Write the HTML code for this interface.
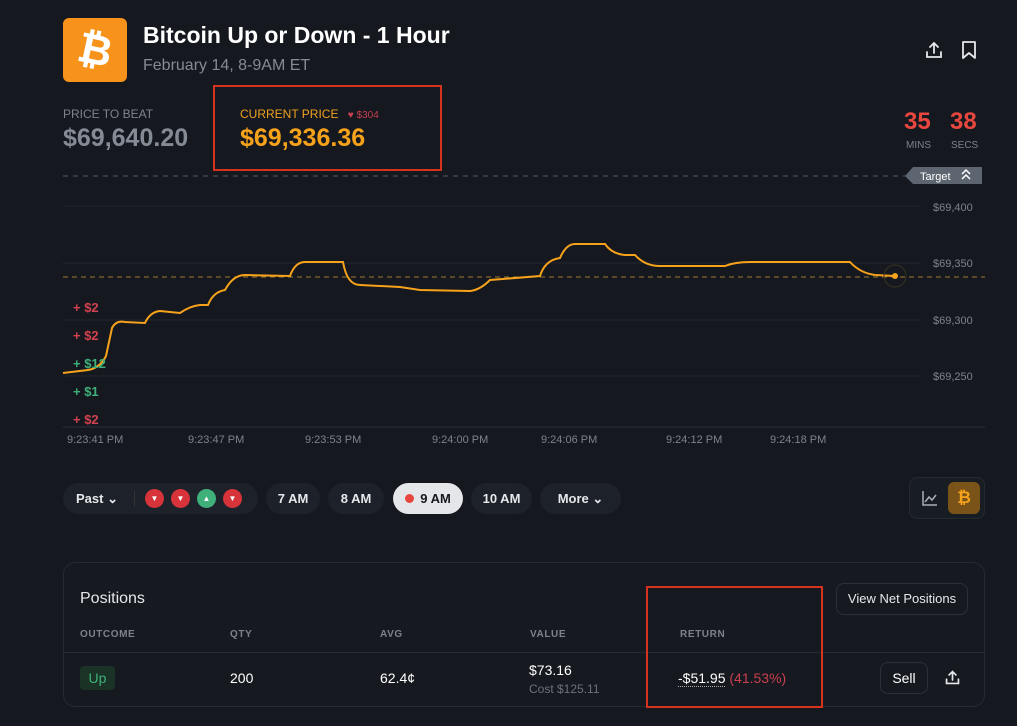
<!DOCTYPE html>
<html><head><meta charset="utf-8"><style>
*{margin:0;padding:0;box-sizing:border-box}
body{width:1017px;height:726px;background:#15181f;font-family:"Liberation Sans",sans-serif;color:#fff;position:relative;overflow:hidden}
.a{position:absolute}
.pill{position:absolute;top:483px;height:31px;border-radius:16px;background:#1d2129;color:#e6e8eb;font-size:13px;font-weight:bold;display:flex;align-items:center;justify-content:center}
.hd{position:absolute;top:629px;font-size:10px;color:#7d838c;letter-spacing:0.6px;font-weight:bold}
.c{width:19px;height:19px;border-radius:50%;display:inline-flex;align-items:center;justify-content:center;color:#fff;font-size:8px;font-style:normal}
</style></head><body>
<div class="a" style="left:63px;top:18px;width:64px;height:64px;background:#f7931a;border-radius:6px;color:#fff;font-size:42px;font-weight:bold;text-align:center;line-height:64px"><span style="display:inline-block;transform:rotate(12deg)">₿</span></div>
<div class="a" style="left:143px;top:22px;font-size:23px;font-weight:bold">Bitcoin Up or Down - 1 Hour</div>
<div class="a" style="left:143px;top:57px;font-size:16px;color:#858b94">February 14, 8-9AM ET</div>
<svg class="a" style="left:924px;top:40px" width="20" height="20" viewBox="0 0 20 20" fill="none" stroke="#e6e8eb" stroke-width="1.8" stroke-linecap="round"><path d="M10 13V3M6 7l4-4 4 4M3 12v5h14v-5"/></svg>
<svg class="a" style="left:960px;top:40px" width="18" height="20" viewBox="0 0 18 20" fill="none" stroke="#e6e8eb" stroke-width="1.8" stroke-linejoin="round"><path d="M3 2h12v16l-6-5-6 5z"/></svg>
<div class="a" style="left:63px;top:107px;font-size:12px;color:#7d838c">PRICE TO BEAT</div>
<div class="a" style="left:63px;top:124px;font-size:25px;font-weight:bold;color:#858b94">$69,640.20</div>
<div class="a" style="left:213px;top:85px;width:229px;height:86px;border:2.5px solid #d6321e"></div>
<div class="a" style="left:240px;top:107px;font-size:12px;color:#f0a020">CURRENT PRICE <span style="color:#c84050;font-size:10px;margin-left:6px">♥ $304</span></div>
<div class="a" style="left:240px;top:124px;font-size:25px;font-weight:bold;color:#f7a21b">$69,336.36</div>
<div class="a" style="left:904px;top:108px;font-size:24px;font-weight:bold;color:#e8473f">35</div>
<div class="a" style="left:950px;top:108px;font-size:24px;font-weight:bold;color:#e8473f">38</div>
<div class="a" style="left:906px;top:140px;font-size:10px;color:#7d838c">MINS</div>
<div class="a" style="left:951px;top:140px;font-size:10px;color:#7d838c">SECS</div>
<svg class="a" style="left:0;top:160px" width="1017" height="290">
<line x1="63" y1="16" x2="905" y2="16" stroke="#555b64" stroke-dasharray="5,5"/>
<path d="M905 16l8-9h69v17h-69z" fill="#5c6570"/>
<text x="920" y="20" fill="#fff" font-size="11" font-family="Liberation Sans">Target</text>
<path d="M962 14l4-4 4 4M962 19l4-4 4 4" stroke="#fff" stroke-width="1.5" fill="none"/>
<g stroke="#23272e"><line x1="63" y1="46" x2="920" y2="46"/><line x1="63" y1="103" x2="920" y2="103"/><line x1="63" y1="160" x2="920" y2="160"/><line x1="63" y1="216" x2="920" y2="216"/><line x1="63" y1="267" x2="985" y2="267" stroke="#2c3038"/></g>
<line x1="63" y1="117" x2="985" y2="117" stroke="#9a7a30" stroke-dasharray="5,4"/>
<g fill="#7d838c" font-size="11" font-family="Liberation Sans"><text x="933" y="51">$69,400</text><text x="933" y="107">$69,350</text><text x="933" y="164">$69,300</text><text x="933" y="220">$69,250</text>
<text x="67" y="283">9:23:41 PM</text><text x="188" y="283">9:23:47 PM</text><text x="305" y="283">9:23:53 PM</text><text x="432" y="283">9:24:00 PM</text><text x="541" y="283">9:24:06 PM</text><text x="666" y="283">9:24:12 PM</text><text x="770" y="283">9:24:18 PM</text></g>
<path d="M63 213L88 210Q100 208 106 196L112 168Q116 160 125 162L145 163Q150 152 160 151L180 153Q190 146 200 145L208 145Q213 132 225 130Q233 115 245 115L290 116Q295 102 305 102L343 102Q347 125 360 125L400 127L420 130L470 131Q480 130 490 120L540 116Q545 100 560 98Q566 84 575 84L605 84Q612 94 625 95L635 95Q645 106 660 106L725 106Q735 102 750 102L850 102Q860 113 875 115L895 116" stroke="#f7a21b" stroke-width="2" fill="none"/>
<circle cx="895" cy="116" r="11" fill="none" stroke="#3a3320"/><circle cx="895" cy="116" r="3" fill="#f7a21b"/>
<g font-size="13" font-weight="bold" font-family="Liberation Sans"><text x="73" y="152" fill="#d2424f">+ $2</text><text x="73" y="180" fill="#d2424f">+ $2</text><text x="73" y="208" fill="#3fb07a">+ $12</text><text x="73" y="236" fill="#3fb07a">+ $1</text><text x="73" y="264" fill="#d2424f">+ $2</text></g>
</svg>
<div class="pill" style="left:63px;width:195px;justify-content:flex-start;padding-left:13px">Past ⌄<span style="width:1px;height:16px;background:#333;margin:0 10px 0 16px"></span>
<span style="display:flex;gap:7px"><i class="c" style="background:#d6333a">▼</i><i class="c" style="background:#d6333a">▼</i><i class="c" style="background:#3fb07a">▲</i><i class="c" style="background:#d6333a">▼</i></span></div>
<div class="pill" style="left:266px;width:54px">7 AM</div>
<div class="pill" style="left:328px;width:56px">8 AM</div>
<div class="pill" style="left:393px;width:70px;background:#e4e6ea;color:#15181f"><i style="width:9px;height:9px;border-radius:50%;background:#e8473f;margin-right:6px"></i>9 AM</div>
<div class="pill" style="left:471px;width:61px">10 AM</div>
<div class="pill" style="left:540px;width:81px">More ⌄</div>
<div class="a" style="left:909px;top:477px;width:76px;height:42px;border:1px solid #252a32;border-radius:8px;background:#181c23"></div>
<svg class="a" style="left:920px;top:488px" width="20" height="20" viewBox="0 0 20 20" fill="none" stroke="#aab0b8" stroke-width="1.5"><path d="M3 3v14h14M5 14l4-5 3 3 4-5"/></svg>
<div class="a" style="left:948px;top:482px;width:32px;height:32px;background:#7a5318;border-radius:6px;color:#f7a21b;font-size:17px;font-weight:bold;text-align:center;line-height:32px">₿</div>
<div class="a" style="left:63px;top:562px;width:922px;height:145px;border:1px solid #262a31;border-radius:12px;background:#16191f"></div>
<div class="a" style="left:80px;top:590px;font-size:16px;color:#e6e8eb">Positions</div>
<div class="a" style="left:836px;top:583px;width:132px;height:32px;border:1px solid #2c3038;border-radius:8px;font-size:13px;color:#e6e8eb;text-align:center;line-height:30px">View Net Positions</div>
<div class="hd" style="left:80px">OUTCOME</div><div class="hd" style="left:230px">QTY</div><div class="hd" style="left:380px">AVG</div><div class="hd" style="left:530px">VALUE</div><div class="hd" style="left:680px">RETURN</div>
<div class="a" style="left:64px;top:652px;width:920px;height:1px;background:#262a31"></div>
<div class="a" style="left:80px;top:666px;width:35px;height:24px;background:#1a3326;border-radius:4px;color:#3fb07a;font-size:14px;text-align:center;line-height:24px">Up</div>
<div class="a" style="left:230px;top:670px;font-size:14px">200</div>
<div class="a" style="left:380px;top:670px;font-size:14px">62.4¢</div>
<div class="a" style="left:529px;top:662px;font-size:14px">$73.16</div>
<div class="a" style="left:529px;top:682px;font-size:12px;color:#6c727b">Cost $125.11</div>
<div class="a" style="left:678px;top:670px;font-size:14px"><span style="border-bottom:1px dotted #aaa">-$51.95</span> <span style="color:#c84050">(41.53%)</span></div>
<div class="a" style="left:646px;top:586px;width:177px;height:122px;border:2.5px solid #d6321e"></div>
<div class="a" style="left:880px;top:662px;width:48px;height:32px;border:1px solid #2c3038;border-radius:8px;font-size:14px;text-align:center;line-height:30px">Sell</div>
<svg class="a" style="left:944px;top:669px" width="17" height="17" viewBox="0 0 20 20" fill="none" stroke="#e6e8eb" stroke-width="2" stroke-linecap="round"><path d="M10 13V3M6 7l4-4 4 4M3 12v5h14v-5"/></svg>
</body></html>
